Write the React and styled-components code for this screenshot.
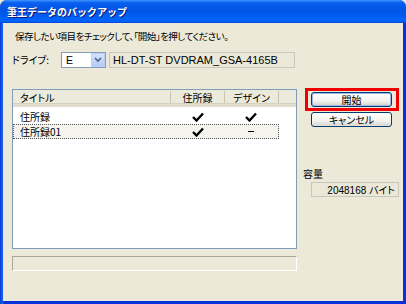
import React from "react";
import styled, { createGlobalStyle } from "styled-components";

const Global = createGlobalStyle`
  html, body { margin: 0; padding: 0; background: #ECE9D8; }
  body {
    font-family: "Noto Sans CJK JP", "Noto Sans", sans-serif;
    font-size: 10px;
    color: #000;
    font-feature-settings: "palt";
  }
  * { box-sizing: border-box; }
`;

const Window = styled.div`
  width: 406px;
  height: 304px;
  display: flex;
  flex-direction: column;
  background: #0842D6;
  border-radius: 7px 7px 0 0;
  overflow: hidden;
`;

const TitleBar = styled.div`
  height: 23px;
  flex: none;
  display: flex;
  align-items: center;
  padding-left: 7px;
  background: linear-gradient(#3D95FF 0%, #0A5FF0 12%, #0054E3 45%, #0061F8 80%, #0065FF 90%, #0048D8 100%);
  color: #fff;
  font-weight: bold;
  font-size: 10px;
  font-feature-settings: normal;
  text-shadow: 1px 1px 0 #0A1883;
`;

const Frame = styled.div`
  flex: 1;
  display: flex;
  padding: 0 3px 3px 3px;
  background: linear-gradient(90deg, #0831D9, #166AEE 2px, #0831D9 4px);
`;

const Body = styled.div`
  flex: 1;
  background: #ECE9D8;
  padding: 6px 0 0 9px;
  display: flex;
  flex-direction: column;
`;

const Instruction = styled.div`
  height: 14px;
  line-height: 14px;
  padding-left: 3px;
  font-size: 9.5px;
  letter-spacing: -0.5px;
  white-space: nowrap;
`;

const DriveRow = styled.div`
  margin-top: 9px;
  display: flex;
  align-items: center;
  height: 16px;
`;

const Label = styled.div`
  width: 49px;
  line-height: 16px;
  white-space: nowrap;
`;

const Combo = styled.div`
  width: 45px;
  height: 16px;
  border: 1px solid #7F9DB9;
  background: #fff;
  display: flex;
  align-items: center;
  justify-content: space-between;
  padding-left: 4px;
  font-family: "Liberation Sans", sans-serif;
  font-size: 10.5px;
`;

const ComboButton = styled.div`
  width: 14px;
  height: 14px;
  background: linear-gradient(#D6E2FD, #B6CBF8);
  border: 1px solid #BBCDF7;
  border-radius: 1px;
  display: flex;
  align-items: center;
  justify-content: center;
`;

const ReadField = styled.div`
  margin-left: 3px;
  width: ${p => p.$w}px;
  height: ${p => p.$h || 16}px;
  border: 1px solid #C9C7BA;
  background: #EBE8D7;
  display: flex;
  align-items: center;
  justify-content: ${p => (p.$right ? "flex-end" : "flex-start")};
  padding: 0 3px;
  font-family: "Liberation Sans", "Noto Sans CJK JP", sans-serif;
  font-size: ${p => p.$fs || 10}px;
  white-space: nowrap;
`;

const Main = styled.div`
  margin-top: 21px;
  display: flex;
  gap: 8px;
`;

const LeftCol = styled.div`
  width: 285px;
  display: flex;
  flex-direction: column;
  gap: 7px;
`;

const ListBox = styled.div`
  height: 160px;
  border: 1px solid #7F9DB9;
  background: #fff;
  display: flex;
  flex-direction: column;
`;

const HeaderRow = styled.div`
  height: 17px;
  display: flex;
  background: #EBEADB;
  border-bottom: 3px solid #E2DECD;
  box-shadow: inset 0 -1px 0 #D6D2C2;
`;

const HeadCell = styled.div`
  width: ${p => p.$w}px;
  padding-left: ${p => (p.$center ? 0 : 7)}px;
  text-align: ${p => (p.$center ? "center" : "left")};
  line-height: 13px;
  white-space: nowrap;
  border-right: ${p => (p.$sep ? "1px solid #C7C5B2" : "none")};
  margin: 1px 0;
`;

const Row = styled.div`
  height: 15px;
  width: 266px;
  display: flex;
  align-items: center;
  margin-top: ${p => (p.$first ? 2 : 0)}px;
  border: 1px dotted ${p => (p.$focus ? "#555" : "transparent")};
  background: ${p => (p.$focus ? "#F4F3EE" : "transparent")};
`;

const Cell = styled.div`
  width: ${p => p.$w}px;
  padding-left: ${p => (p.$center ? 0 : 6)}px;
  display: flex;
  align-items: center;
  justify-content: ${p => (p.$center ? "center" : "flex-start")};
  line-height: 13px;
  white-space: nowrap;
`;

const Dash = styled.div`
  width: 6px;
  height: 1px;
  background: #000;
`;

const Progress = styled.div`
  height: 15px;
  border: 1px solid #ACA899;
  border-right-color: #fff;
  border-bottom-color: #fff;
`;

const RightCol = styled.div`
  width: 94px;
  display: flex;
  flex-direction: column;
  margin-top: -1px;
`;

const Highlight = styled.div`
  border: 3px solid #F00000;
  padding: 1px 4px 1px 3px;
  height: 23px;
`;

const Button = styled.div`
  width: 81px;
  height: 15px;
  border: 1px solid #003C74;
  border-radius: 3px;
  background: linear-gradient(#FFFFFF, #F3F3EF 60%, #D6D0C5);
  box-shadow: inset 0 0 0 1px ${p => (p.$default ? "#9DB9EB" : "rgba(255,255,255,0.3)")};
  display: flex;
  align-items: center;
  justify-content: center;
  line-height: 13px;
  white-space: nowrap;
  margin-left: ${p => p.$offset || 0}px;
`;

const Gap = styled.div`
  height: ${p => p.$h}px;
`;

const CapLabel = styled.div`
  margin-top: 40px;
  margin-left: -2px;
  line-height: 13px;
`;

const CapWrap = styled.div`
  margin-top: 2px;
  margin-left: 3px;
`;

const Check = () => (
  <svg width="12" height="10" viewBox="0 0 12 10">
    <path d="M1 5 L4.5 8.5 L11 1.5" fill="none" stroke="#000" strokeWidth="2.4" />
  </svg>
);

const Chevron = () => (
  <svg width="8" height="6" viewBox="0 0 8 6">
    <path d="M1 1 L4 4 L7 1" fill="none" stroke="#4D6185" strokeWidth="1.6" />
  </svg>
);

export default function App() {
  return (
    <>
      <Global />
      <Window>
        <TitleBar>筆王データのバックアップ</TitleBar>
        <Frame>
          <Body>
            <Instruction>保存したい項目をチェックして、「開始」を押してください。</Instruction>
            <DriveRow>
              <Label>ドライブ:</Label>
              <Combo>
                E
                <ComboButton><Chevron /></ComboButton>
              </Combo>
              <ReadField $w={186} $fs={11}>HL-DT-ST DVDRAM_GSA-4165B</ReadField>
            </DriveRow>
            <Main>
              <LeftCol>
                <ListBox>
                  <HeaderRow>
                    <HeadCell $w={158} $sep>タイトル</HeadCell>
                    <HeadCell $w={54} $center $sep>住所録</HeadCell>
                    <HeadCell $w={54} $center $sep>デザイン</HeadCell>
                  </HeaderRow>
                  <Row $first>
                    <Cell $w={158}>住所録</Cell>
                    <Cell $w={54} $center><Check /></Cell>
                    <Cell $w={54} $center><Check /></Cell>
                  </Row>
                  <Row $focus>
                    <Cell $w={158}>住所録01</Cell>
                    <Cell $w={54} $center><Check /></Cell>
                    <Cell $w={54} $center><Dash /></Cell>
                  </Row>
                </ListBox>
                <Progress />
              </LeftCol>
              <RightCol>
                <Highlight>
                  <Button $default>開始</Button>
                </Highlight>
                <Gap $h={1} />
                <Button $offset={6}>キャンセル</Button>
                <CapLabel>容量</CapLabel>
                <CapWrap>
                  <ReadField $w={88} $h={15} $right>2048168 バイト</ReadField>
                </CapWrap>
              </RightCol>
            </Main>
          </Body>
        </Frame>
      </Window>
    </>
  );
}
